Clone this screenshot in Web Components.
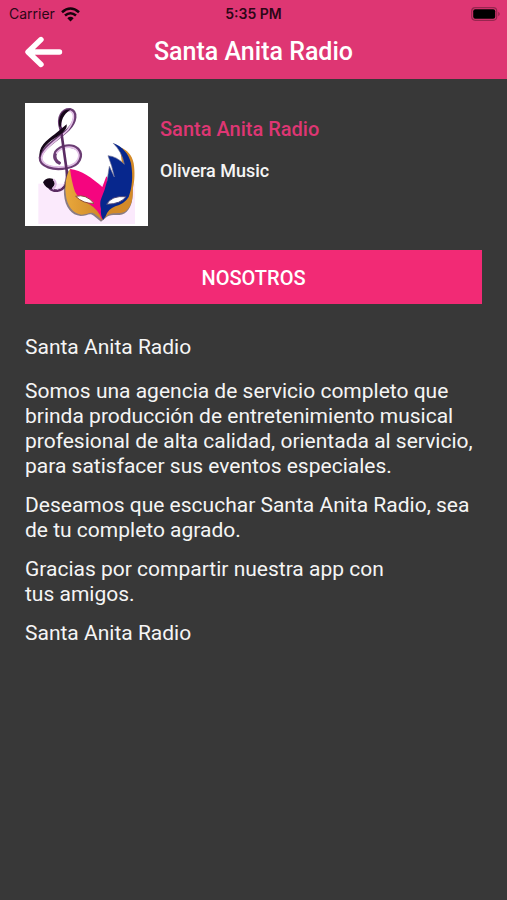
<!DOCTYPE html>
<html lang="es">
<head>
<meta charset="utf-8">
<meta name="viewport" content="width=device-width, initial-scale=1">
<title>Santa Anita Radio</title>
<style>
html, body { margin: 0; background: #383838; }
body { font-family: Roboto, "Liberation Sans", sans-serif; color: #f5f5f5; }
</style>
</head>
<body>
<radio-app></radio-app>

<template id="t-status">
<style>
:host { display: grid; grid-template-columns: 1fr auto 1fr; align-items: center; height: 28px; padding: 0 7px 0 9px; box-sizing: border-box; font: 400 14px/20px Inter, sans-serif; color: #2c0717; }
.left { display: flex; align-items: center; gap: 6px; }
.time { font-weight: 600; padding-right: 2px; }
.battery { justify-self: end; }
svg { display: block; }
</style>
<div class="left"><span>Carrier</span>
<svg width="19" height="15" viewBox="0 0 19 15" aria-hidden="true"><g fill="none" stroke="#16030b" stroke-width="2.6"><path d="M1 5.200Q9.500-2.200 18 5.200"/><path d="M4 8.600Q9.500 3.900 15 8.600"/></g><path d="M6.300 11.200Q9.500 8.500 12.700 11.200L9.500 14.500Z" fill="#16030b"/></svg></div>
<span class="time">5:35 PM</span>
<svg class="battery" width="29" height="14" viewBox="0 0 29 14" aria-hidden="true"><rect x=".7" y=".7" width="25" height="12.600" rx="3.500" fill="none" stroke="#97264f" stroke-width="1.200"/><rect x="2.200" y="2.300" width="22" height="9.400" rx="2" fill="#000"/><path d="M27.200 4.800q1.600.8 1.600 2.200t-1.600 2.200z" fill="#97264f"/></svg>
</template>

<template id="t-header">
<style>
:host { display: block; background: #de3673; }
.bar { display: grid; grid-template-columns: 80px 1fr 80px; align-items: center; height: 51px; }
button { justify-self: start; margin: 0 0 4px 18px; padding: 4px 6px; border: 0; background: none; cursor: pointer; }
svg { display: block; }
h1 { margin: 0 0 4px; text-align: center; font-weight: 500; font-size: 25px; line-height: 32px; color: #fff; }
</style>
<status-bar></status-bar>
<div class="bar">
<button type="button" aria-label="Volver"><svg width="40" height="32" viewBox="0 0 40 32"><path d="M17 3.500L4 16L17 28.500M5 16H35.500" fill="none" stroke="#fff" stroke-width="5.400" stroke-linecap="round" stroke-linejoin="round"/></svg></button>
<h1><slot></slot></h1>
</div>
</template>

<template id="t-logo">
<style>
:host { display: block; width: 123px; height: 123px; background: #fff; }
svg { display: block; width: 100%; height: 100%; }
</style>
<svg viewBox="15 24 369 369" role="img" aria-label="Máscara y clave de sol">
<defs>
<linearGradient id="gold" x1="0" x2="1"><stop offset="0" stop-color="#e9a83c"/><stop offset=".5" stop-color="#d08a28"/><stop offset="1" stop-color="#d48a28"/></linearGradient>
</defs>
<rect x="55" y="266" width="290" height="121" fill="#fbeafc"/>
<g fill="none" stroke-linecap="round" stroke-linejoin="round">
<path d="M122 100C112 65 128 43 150 44C172 50 168 80 145 103C115 132 65 158 61 188C60 214 100 226 140 218C180 212 190 180 173 162C155 147 122 151 107 172C100 188 108 200 118 204" stroke="#6b3d73" stroke-width="10"/>
<path d="M124 98C116 66 130 47 150 48C167 54 162 80 143 105C113 136 69 160 65 188C65 211 102 221 140 214C175 208 184 182 170 165C155 151 124 155 110 174" stroke="#e2c0e6" stroke-width="5"/>
<path d="M122 98L140 226Q146 282 112 287Q97 288 90 280" stroke="#5b2d63" stroke-width="8"/>
<path d="M137 245Q139 278 112 283" stroke="#dcb6e0" stroke-width="3"/>
</g>
<path d="M118 95C112 65 128 40 152 44C138 52 124 66 123 95Z" fill="#160719"/>
<path d="M128 113C98 135 66 148 60 188C52 158 80 135 104 118L140 88C142 98 136 106 128 113Z" fill="#160719"/>
<path d="M69 262Q78 246 98 251Q112 264 94 282Q77 281 69 262Z" fill="#160719"/>
<path d="M100 253Q116 266 98 283" fill="none" stroke="#dcb6e0" stroke-width="6"/>
<path d="M150 222C138 240 134 270 135 295C138 335 158 358 185 360C205 360 212 348 225 360L246 377L264 362C285 350 305 365 323 347C340 330 342 305 341 278L247 310Z" fill="#4d4142" opacity=".65" transform="translate(-3 3)"/>
<path d="M150 222C138 240 135 270 137 295C140 335 160 356 185 359C205 359 212 346 227 359L246 375L264 360C285 348 305 362 321 345C338 328 338 305 339 278C344 260 345 230 341 205C336 180 322 165 300 157L310 240L262 290L247 300C215 270 190 235 150 222Z" fill="url(#gold)"/>
<path d="M150 222C185 226 215 248 247 276L259 244L272 262L260 330L246 374Q236 344 206 326Q174 310 165 290Q155 262 150 222Z" fill="#f5057f"/>
<path d="M279 144C308 155 326 176 333 205C340 245 336 280 326 306Q314 326 286 334Q264 342 257 364L249 375Q241 360 243 342Q238 325 244 310Q254 288 261 259L268 214L283 246Q277 214 264 182Q290 184 313 208Q306 170 279 144Z" fill="#07278d"/>
<path d="M279 144Q306 170 313 208Q290 184 264 182Q277 214 283 246L268 214L261 259" fill="none" stroke="#779" stroke-width="2"/>
<path d="M167 304Q198 296 222 325Q190 327 167 304Z" fill="#fff" stroke="#8b5038" stroke-width="3"/>
<path d="M260 328Q274 301 318 305Q303 327 260 328Z" fill="#fff" stroke="#4b467b" stroke-width="3"/>
</svg>
</template>

<template id="t-station">
<style>
:host { display: flex; gap: 12px; }
.text { display: flex; flex-direction: column; gap: 16px; padding-top: 13px; }
h2 { margin: 0; font-weight: 500; font-size: 20px; line-height: 26px; color: #de3673; }
p { margin: 0; font-weight: 500; font-size: 18px; line-height: 26px; }
</style>
<station-logo></station-logo>
<div class="text"><h2><slot name="name"></slot></h2><p><slot name="owner"></slot></p></div>
</template>

<template id="t-section">
<style>
:host { display: block; }
button { display: block; width: 100%; height: 54px; margin: 0; padding: 2px 0 0; border: 0; border-radius: 0; background: #f22a75; color: #fff; font: 500 20px/26px Roboto, sans-serif; cursor: pointer; }
</style>
<button type="button"><slot></slot></button>
</template>

<template id="t-about">
<style>
:host { display: block; font-weight: 400; font-size: 21px; line-height: 25px; }
p { margin: 0 0 14px; }
p:first-of-type { margin-bottom: 19px; }
</style>
<p>Santa Anita Radio</p>
<p>Somos una agencia de servicio completo que brinda producción de entretenimiento musical profesional de alta calidad, orientada al servicio, para satisfacer sus eventos especiales.</p>
<p>Deseamos que escuchar Santa Anita Radio, sea de tu completo agrado.</p>
<p>Gracias por compartir nuestra app con<br>tus amigos.</p>
<p>Santa Anita Radio</p>
</template>

<template id="t-app">
<style>
:host { display: block; min-height: 100vh; background: #383838; }
main { display: flex; flex-direction: column; padding: 24px 25px; }
section-button { margin: 24px 0 31px; }
</style>
<app-header>Santa Anita Radio</app-header>
<main>
<station-card><span slot="name">Santa Anita Radio</span><span slot="owner">Olivera Music</span></station-card>
<section-button>NOSOTROS</section-button>
<about-text></about-text>
</main>
</template>

<script>
const define = (name, id) => customElements.define(name, class extends HTMLElement {
  constructor() {
    super();
    this.attachShadow({ mode: "open" }).append(document.getElementById(id).content.cloneNode(true));
  }
});
define("status-bar", "t-status");
define("app-header", "t-header");
define("station-logo", "t-logo");
define("station-card", "t-station");
define("section-button", "t-section");
define("about-text", "t-about");
define("radio-app", "t-app");
</script>
</body>
</html>
